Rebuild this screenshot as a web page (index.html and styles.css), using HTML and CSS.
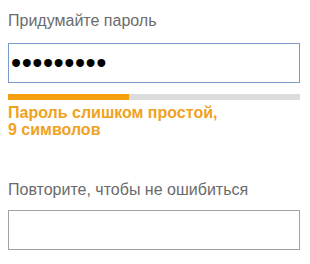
FILE: index.html
```html
<!DOCTYPE html>
<html lang="ru">
<head>
  <meta charset="UTF-8" />
  <title>Пароль</title>
  <link rel="stylesheet" href="styles.css">
</head>
<body>
<form class="form">
  <div class="field">
    <label class="label" for="pass">Придумайте пароль</label>
    <input id="pass" class="input input-active" type="password" value="123456789">
    <div class="strength"><div class="strength-fill" style="width: 41.5%"></div></div>
    <div class="hint">Пароль слишком простой,<br>9 символов</div>
  </div>
  <div class="field field-repeat">
    <label class="label" for="pass2">Повторите, чтобы не ошибиться</label>
    <input id="pass2" class="input" type="password">
  </div>
</form>
</body>
</html>
```

FILE: styles.css
```css
html, body {
  margin: 0;
  padding: 0;
  background: #fff;
  font-family: "Liberation Sans", Arial, sans-serif;
}

.form {
  padding: 12px 10px 0 8px;
}

.field {
  display: flex;
  flex-direction: column;
}

.label {
  font-size: 16px;
  line-height: 18px;
  color: #6b6b6b;
  margin-bottom: 13px;
}

.input {
  box-sizing: border-box;
  width: 292px;
  height: 40px;
  margin: 0;
  padding: 0 0 0 2px;
  border: 1px solid #a3a3a3;
  background: #fff;
  outline: none;
}

.input-active {
  border-color: #7b9ac9;
  font-size: 29px;
  letter-spacing: 0.5px;
  color: #000;
}

.strength {
  height: 6px;
  width: 292px;
  margin-top: 11px;
  background: #dcdcdc;
}

.strength-fill {
  height: 100%;
  background: #f5a10f;
}

.hint {
  margin-top: 4px;
  font-size: 16px;
  line-height: 17px;
  font-weight: bold;
  color: #f0a21e;
}

.field-repeat {
  margin-top: 43px;
}

.field-repeat .label {
  margin-bottom: 11px;
}
```
